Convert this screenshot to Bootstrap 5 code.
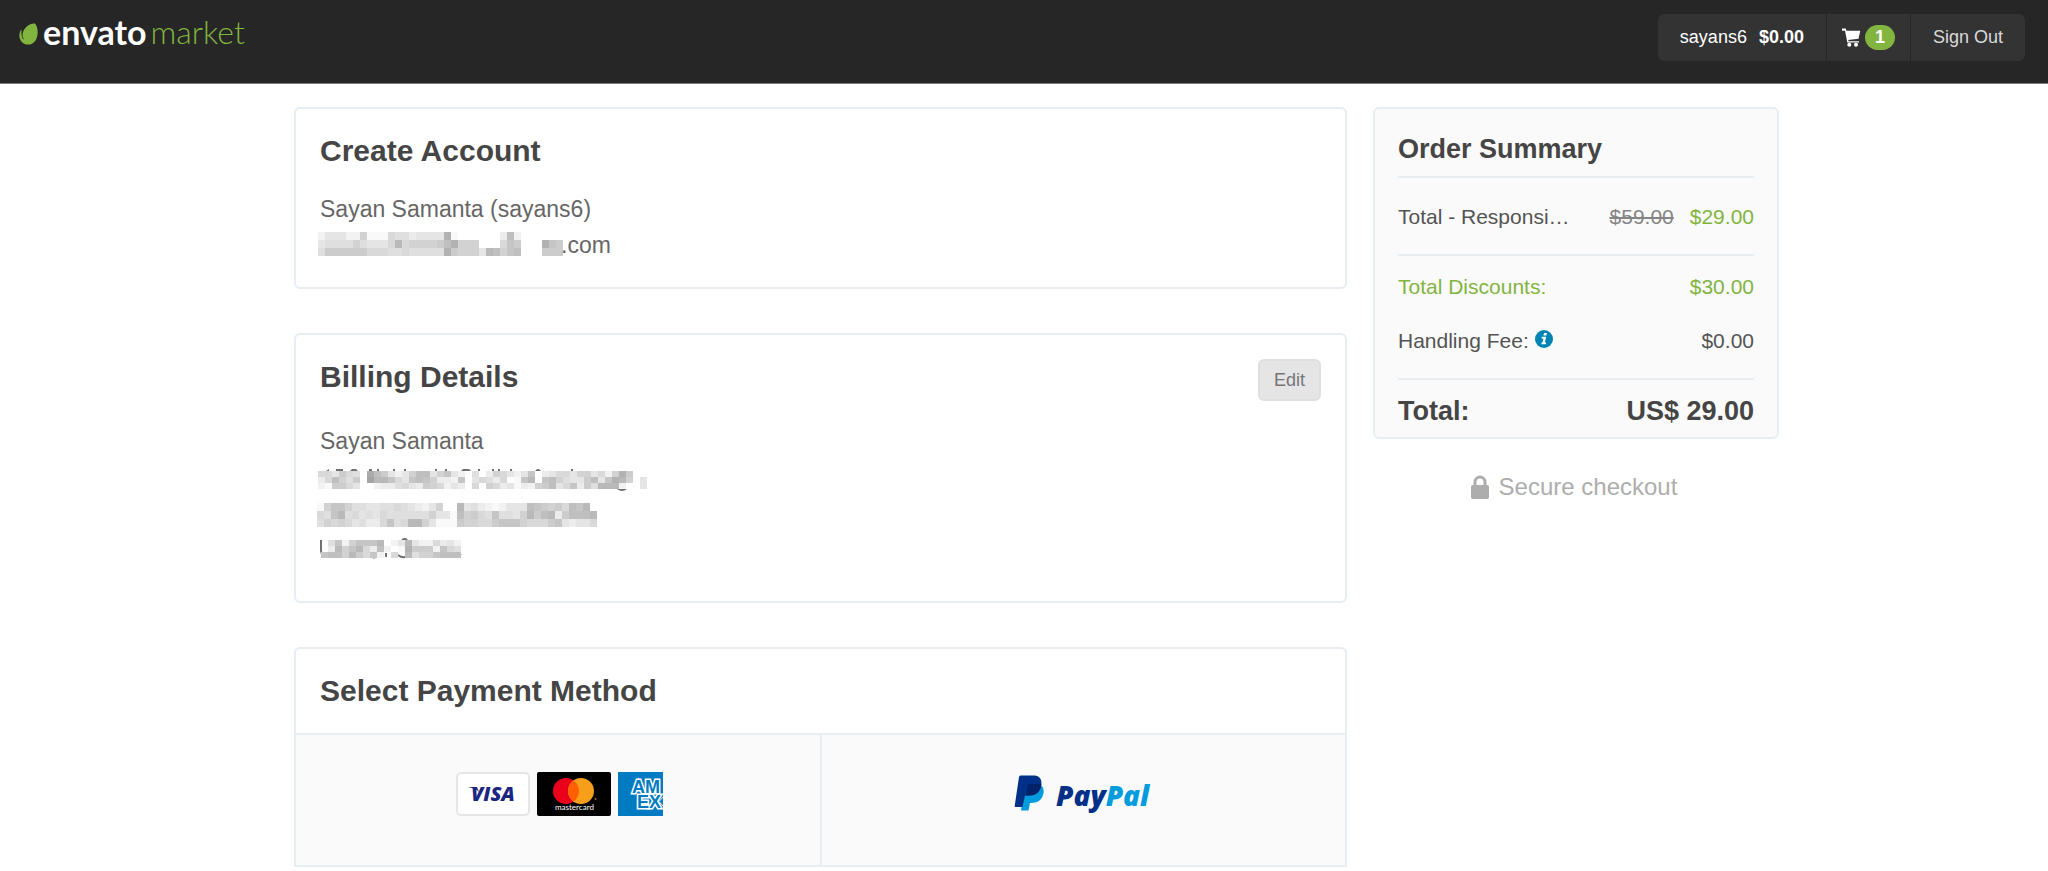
<!DOCTYPE html>
<html lang="en">
<head>
<meta charset="utf-8">
<meta name="viewport" content="width=device-width, initial-scale=1">
<title>Checkout - Envato Market</title>
<link href="https://cdn.jsdelivr.net/npm/bootstrap@5.3.0/dist/css/bootstrap.min.css" rel="stylesheet">
<style>
  body { font-family: "Liberation Sans", Arial, sans-serif; font-size: 21px; line-height: 30px; color: #545454; background: #fff; }
  .site-header { background: #262626; border-bottom: 1px solid #7d7d7d; padding: 14px 23px 22px 19px; }
  .brand { line-height: 36px; }
  .brand-main { font: 700 34px/36px Lato, sans-serif; color: #fff; }
  .brand-sub { font: 300 32px/36px Lato, sans-serif; color: #82b440; }
  .user-nav { background: #262626; border-radius: 6px; overflow: hidden; gap: 1px; font-size: 18px; line-height: 47px; }
  .user-nav a { background: #333; color: #d9d9d9; text-decoration: none; padding: 0 22px; }
  .user-nav .user-link { color: #fff; }
  .user-nav .cart-link { padding: 0 15px; }
  .cart-count { background: #82b440; color: #fff; font-size: 18px; line-height: 25px; width: 30px; border-radius: 13px; }
  .checkout { max-width: 1510px; padding: 23px 0 8px 25px; gap: 26px; }
  .main-col { gap: 44px; min-width: 0; }
  .panel { border: 2px solid #e7edf1; border-radius: 6px; background: #fff; }
  .panel-pad { padding: 24px; }
  .panel-title { font-size: 30px; line-height: 36px; font-weight: 700; color: #454545; margin: 0; }
  .details { font-size: 23px; line-height: 36px; color: #666; margin-top: 22px; }
  .details .detail-line { height: 36px; }
  .address { padding-bottom: 10px; }
  .edit-btn { background: #e5e5e5; border: 2px solid #dfdfdf; border-radius: 6px; color: #757575; font-size: 18px; line-height: 24px; padding: 7px 14px; }
  .pay-options { background: #fafafa; border-top: 2px solid #e7edf1; }
  .pay-option { background: none; border: 0; height: 130px; padding: 0 0 12px; }
  .pay-option + .pay-option { border-left: 2px solid #e7edf1; }
  .side-col { flex: 0 0 406px; }
  .summary { background: #fafafa; padding: 24px 23px 10px; }
  .summary-title { font-size: 27px; line-height: 32px; font-weight: 700; color: #454545; margin: 0; padding-bottom: 11px; }
  .ruled { border-top: 2px solid #e7edf1; }
  .sum-row { padding: 24px 0 22px; }
  .sum-discount { padding-top: 16px; }
  .green { color: #82b440; }
  .old-price { color: #858585; }
  .grand { font-size: 27px; line-height: 32px; font-weight: 700; color: #454545; padding-top: 15px; }
  .secure { font-size: 24px; line-height: 30px; color: #adadad; margin-top: 33px; padding-right: 4px; gap: 10px; }
</style>
</head>
<body>
<header class="site-header d-flex justify-content-between align-items-start">
  <a href="#" class="brand d-flex text-decoration-none" aria-label="envato market">
    <svg width="20" height="24" viewBox="0 0 21 24" class="mt-2 me-1" aria-hidden="true"><path fill="#82b440" d="M17 1.300C14-.2 7 3 4.400 9.500 3.200 13 3.500 15 5 17c.2.400-.4.700-.7.300C2.800 15.500 2.300 12 2.700 8.200c0-.5-.7-.6-.9-.2C-.3 12-.2 17 3 20.300c4 4 10.500 3.700 14-1C21.300 13 19.500 3.400 17 1.300z"/></svg>
    <span class="brand-main">envato</span><span class="brand-sub ms-1">market</span>
  </a>
  <nav class="user-nav d-flex">
    <a href="#" class="user-link">sayans6<b class="ms-2 ps-1">$0.00</b></a>
    <a href="#" class="cart-link d-flex align-items-center gap-1">
      <svg width="19" height="19" viewBox="0 0 19 19" aria-hidden="true"><path fill="#fff" d="M0 .5h3.700l.8 2.300H18.300L16.500 10.800 6.200 12l.4 1.200H17v1.300H5.300L3 2.800H0z"/><circle cx="7.300" cy="16.700" r="2" fill="#fff"/><circle cx="14" cy="16.700" r="2" fill="#fff"/></svg>
      <b class="cart-count text-center">1</b>
    </a>
    <a href="#">Sign Out</a>
  </nav>
</header>

<main class="checkout mx-auto d-flex align-items-start">
  <div class="main-col flex-grow-1 d-flex flex-column">
    <section class="panel panel-pad">
      <h2 class="panel-title">Create Account</h2>
      <div class="details">
        <div class="detail-line">Sayan Samanta (sayans6)</div>
        <div class="detail-line d-flex">
          <svg class="mosaic" width="241" height="36" data-x="-2" data-y="5" data-w="7" data-h="8"
            data-rows="dbbbdd8eee9aacbbbb3effffffc5d,baaaa8abbb9498888753888fff967fff367,a777777999aa9aaaaa37888b45865fff777" overflow="visible" aria-hidden="true"></svg><span>.com</span>
        </div>
      </div>
    </section>

    <section class="panel panel-pad">
      <div class="d-flex justify-content-between align-items-start">
        <h2 class="panel-title">Billing Details</h2>
        <button type="button" class="edit-btn">Edit</button>
      </div>
      <div class="details address">
        <div class="detail-line">Sayan Samanta</div>
        <div class="detail-line"><svg class="mosaic" width="330" height="36" data-x="-2" data-y="10" data-w="7" data-h="6"
            data-rows="99b79af257bdb855b86bdfafc89bdb6fcb99b88b9d837ff,c958a7f14469b6568ccd6fb9ac9fe64f658abb75b6348fb,de779bffdcca9bc789dbcf9f89cbecd875b96c7a444dffb" overflow="visible" aria-hidden="true"><path fill="#707070" d="M6 10l3-2v2zM16 8h7v2h-7zM30 10l2-2h4l2 2zM49 8h3v2h-3zM57 8h2v2h-2zM73 8h2v2h-2zM84 8h2v2h-2zM115 8h2v2h-2zM125 8h2v2h-2zM141 10l2-2h6l2 2zM158 8h2v2h-2zM172 8h2v2h-2zM178 8h2v2h-2zM190 8h2v2h-2zM215 10l2-2h2l2 2zM251 8h2v2h-2zM297 28h10q-5 4-10 0z"/></svg></div>
        <div class="detail-line"><svg class="mosaic" width="290" height="36" data-x="-3" data-y="6" data-w="7" data-h="8"
            data-rows="e8668aabbaa9abcdb8ff4bacdedbbb567879564f,9a64a9bab9aaaaaa8bbe5879a6aab84754c75554,a8989bacc96a9448beee788997666899976bcbb9" overflow="visible" aria-hidden="true"></svg></div>
        <div class="detail-line"><svg class="mosaic" width="150" height="36" data-x="1" data-y="7" data-w="7" data-h="6"
            data-rows="fa6d86664fdb4bdd9cbd,fc48649c5dfe3777d69a,65584796df9f4a886555" overflow="visible" aria-hidden="true"><path fill="none" stroke="#707070" stroke-width="2" d="M1 7v11q1 6 6 6q5 0 7-3M22 24v-4M31 24v-4M36 24v-4M42 24v-4M50 23q4 3 8 0M66 24v-4M78 22q5 4 10 1M82 7q3-2 5 0M96 24h4M106 24h6M119 24h4M130 22q6 4 11-1"/></svg></div>
      </div>
    </section>

    <section class="panel rounded-bottom-0">
      <div class="panel-pad pb-4"><h2 class="panel-title">Select Payment Method</h2></div>
      <div class="pay-options row g-0">
        <button type="button" class="pay-option col d-flex align-items-center justify-content-center" aria-label="Credit card">
          <svg width="207" height="44" viewBox="0 0 207 44" class="ms-1">
            <rect x="1" y="1" width="72" height="42" rx="4" fill="#fff" stroke="#e6e6e6" stroke-width="2"/>
            <path d="M12 15h9l2 5-2-2q-4-2-9-3z" fill="#1a2a7c"/>
            <text x="15" y="29" font-family="Open Sans, sans-serif" font-size="20" font-weight="800" font-style="italic" fill="#1a2682">VISA</text>
            <rect x="81" width="74" height="44" rx="2" fill="#000"/>
            <circle cx="110" cy="19" r="13" fill="#eb001b"/><circle cx="125" cy="19" r="13" fill="#f79e1b"/>
            <path fill="#ff5f00" d="M117.500 8.400a13 13 0 0 1 0 21.200a13 13 0 0 1 0-21.200z"/>
            <text x="99" y="38" font-family="Lato, sans-serif" font-size="8" fill="#fff">mastercard</text>
            <circle cx="139.500" cy="27" r="1" fill="#a86d15"/>
            <svg x="162" width="45" height="44" viewBox="0 0 45 44"><rect width="45" height="44" fill="#007bc1"/>
              <text font-family="Liberation Sans, sans-serif" font-size="18" font-weight="700" fill="#007bc1" stroke="#fff" stroke-width="3" paint-order="stroke"><tspan x="14" y="21">AM</tspan><tspan x="19" y="36">EX</tspan></text>
              <path d="M46 24l-5 5.500 5 5.500z" fill="#007bc1" stroke="#fff"/>
            </svg>
          </svg>
        </button>
        <button type="button" class="pay-option col d-flex align-items-center justify-content-center" aria-label="PayPal">
          <svg width="139" height="38" viewBox="0 0 139 38">
            <path fill="#009cde" d="M11 11h17c3 4 1.500 10-1 13s-6 4-11 4l-1.500 7.500H7z"/>
            <path fill="#003087" d="M6.500.5H19c7 0 9.500 4 8 10.500S20 20.500 15 20.500h-4L8.500 32H1.500Q.5 32 .7 31L5 2Q5.300.5 6.500.5z"/>
            <path fill="#012169" d="M14 9h13.400q-.1 5-3.400 8.400c-2.500 2.600-6 3.100-9 3.100h-3z"/>
            <text x="42" y="31" font-family="Open Sans, sans-serif" font-size="28" font-weight="800" font-style="italic"><tspan fill="#003087">Pay</tspan><tspan fill="#009cde">Pal</tspan></text>
          </svg>
        </button>
      </div>
    </section>
  </div>

  <aside class="side-col">
    <section class="panel summary">
      <h2 class="summary-title">Order Summary</h2>
      <div class="ruled sum-row d-flex">
        <span class="me-auto">Total - Responsi…</span>
        <s class="old-price me-3">$59.00</s><span class="green">$29.00</span>
      </div>
      <div class="ruled sum-discount green d-flex justify-content-between"><span>Total Discounts:</span><span>$30.00</span></div>
      <div class="sum-row d-flex justify-content-between">
        <span>Handling Fee: <svg width="18" height="18" viewBox="0 0 18 18" class="align-baseline" aria-label="Info"><circle cx="9" cy="9" r="9" fill="#0084b4"/><path fill="#fff" d="M9 3h3l-.6 2.500h-3zM6.800 6.800h4.400L9.800 12.600h1.400l-.4 1.600H6.200l.4-1.600h.8l1-4.200H6.400z"/></svg></span>
        <span>$0.00</span>
      </div>
      <div class="ruled grand d-flex justify-content-between"><span>Total:</span><span>US$ 29.00</span></div>
    </section>
    <div class="secure d-flex justify-content-center align-items-center">
      <svg width="18" height="24" viewBox="0 0 18 24" aria-hidden="true"><path fill="none" stroke="#adadad" stroke-width="3" d="M4 12V7a5 5 0 0 1 10 0v5"/><rect y="10" width="18" height="14" rx="2" fill="#adadad"/></svg>
      <span>Secure checkout</span>
    </div>
  </aside>
</main>

<script>
  // Paint the privacy mosaics: each hex digit is one cell, 0 = mid grey, f = blank.
  document.querySelectorAll('.mosaic').forEach(function (svg) {
    var d = svg.dataset, w = +d.w, h = +d.h;
    d.rows.split(',').forEach(function (row, r) {
      row.split('').forEach(function (c, k) {
        if (c === 'f') return;
        var v = Math.round(159 + parseInt(c, 16) * 6.4);
        var cell = document.createElementNS('http://www.w3.org/2000/svg', 'rect');
        cell.setAttribute('x', +d.x + k * w);
        cell.setAttribute('y', +d.y + r * h);
        cell.setAttribute('width', w);
        cell.setAttribute('height', h);
        cell.setAttribute('fill', 'rgb(' + v + ',' + v + ',' + v + ')');
        svg.appendChild(cell);
      });
    });
  });
</script>
<script src="https://cdn.jsdelivr.net/npm/bootstrap@5.3.0/dist/js/bootstrap.bundle.min.js"></script>
</body>
</html>
